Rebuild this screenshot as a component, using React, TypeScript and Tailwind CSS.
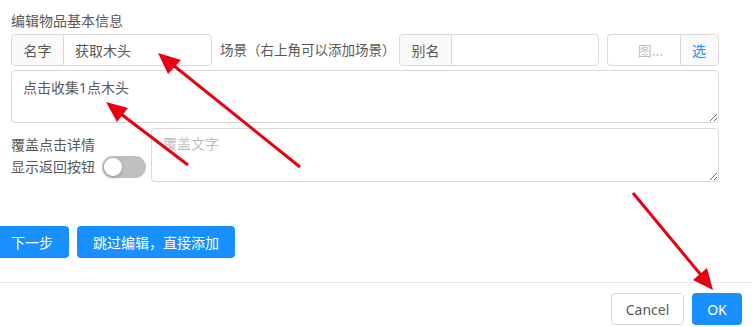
import React from 'react';

const font = "font-['Noto_Sans','Noto_Sans_CJK_SC',sans-serif]";

function Addon({ children, blue }: { children: React.ReactNode; blue?: boolean }) {
  return (
    <div
      className={`flex items-center justify-center bg-[#fafafa] px-[11px] text-[14px] ${
        blue ? 'text-[#1890ff]' : 'text-[#595959]'
      }`}
    >
      {children}
    </div>
  );
}

export default function App() {
  return (
    <div className={`relative w-[752px] h-[327px] overflow-hidden bg-white ${font}`}>
      <div className="pl-[11px] pr-[33px] pt-[11px]">
        {/* 标题 */}
        <div className="h-[20px] leading-[20px] text-[14px] text-[#595959]">编辑物品基本信息</div>

        {/* 名字 / 场景 / 别名 / 图 */}
        <div className="mt-[3px] flex h-[32px] items-stretch">
          <div className="flex w-[201px] rounded-[4px] border border-[#d9d9d9] overflow-hidden">
            <div className="flex w-[52px] items-center justify-center border-r border-[#d9d9d9] bg-[#fafafa] text-[14px] text-[#595959]">
              名字
            </div>
            <div className="flex flex-1 items-center pl-[11px] text-[14px] text-[#595959]">获取木头</div>
          </div>
          <div className="flex w-[187px] items-center pl-[8px] text-[13.5px] text-[#595959] whitespace-nowrap">
            场景（右上角可以添加场景）
          </div>
          <div className="flex w-[200px] rounded-[4px] border border-[#d9d9d9] overflow-hidden">
            <div className="flex w-[52px] items-center justify-center border-r border-[#d9d9d9] bg-[#fafafa] text-[14px] text-[#595959]">
              别名
            </div>
            <div className="flex-1" />
          </div>
          <div className="ml-[8px] flex w-[112px] rounded-[4px] border border-[#d9d9d9] overflow-hidden">
            <div className="flex flex-1 items-center justify-end pr-[17px] text-[14px] text-[#bfbfbf]">图...</div>
            <div className="w-[38px] border-l border-[#d9d9d9] flex">
              <Addon blue>选</Addon>
            </div>
          </div>
        </div>

        {/* 描述 */}
        <textarea
          readOnly
          defaultValue="点击收集1点木头"
          className="mt-[4px] block h-[53px] w-[708px] rounded-[4px] border border-[#d9d9d9] px-[11px] pt-[6px] text-[14px] leading-[21px] text-[#595959] outline-none"
        />

        {/* 覆盖 / 返回按钮 */}
        <div className="mt-[5px] flex">
          <div className="w-[140px] pt-[6px] text-[14px] text-[#595959]">
            <div className="h-[22px] leading-[22px]">覆盖点击详情</div>
            <div className="flex h-[22px] items-center">
              <span className="leading-[22px]">显示返回按钮</span>
              <div className="ml-[7px] relative h-[22px] w-[44px] rounded-full bg-[#bfbfbf]">
                <div className="absolute left-[2px] top-[2px] h-[18px] w-[18px] rounded-full bg-white shadow-[0_2px_4px_rgba(0,35,11,0.2)]" />
              </div>
            </div>
          </div>
          <textarea
            readOnly
            placeholder="覆盖文字"
            className="block h-[54px] w-[568px] rounded-[4px] border border-[#d9d9d9] px-[11px] pt-[4px] text-[14px] leading-[21px] text-[#595959] placeholder:text-[#bfbfbf] outline-none"
          />
        </div>
      </div>

      {/* 下一步 按钮 */}
      <div className="mt-[44px] ml-[-5px] flex gap-[8px]">
        <button className="h-[32px] w-[74px] rounded-[4px] bg-[#1890ff] text-[14px] text-white">下一步</button>
        <button className="h-[32px] w-[158px] rounded-[4px] bg-[#1890ff] text-[14px] text-white">
          跳过编辑，直接添加
        </button>
      </div>

      {/* footer */}
      <div className="mt-[24px] flex justify-end gap-[8px] border-t border-[#e8e8e8] pr-[10px] pt-[10px]">
        <button className="h-[32px] w-[73px] rounded-[4px] border border-[#d9d9d9] bg-white text-[14px] text-[#595959]">
          Cancel
        </button>
        <button className="h-[32px] w-[50px] rounded-[4px] bg-[#1890ff] text-[14px] text-white">OK</button>
      </div>

      {/* 红色箭头标注 */}
      <svg className="pointer-events-none absolute left-0 top-0" width="752" height="327">
        <g stroke="#e60012" strokeWidth="3" fill="none">
          <line x1="300" y1="167" x2="173" y2="65" />
          <line x1="188" y1="165" x2="121" y2="114" />
          <line x1="633" y1="193" x2="701" y2="275" />
        </g>
        <g fill="#e60012">
          <polygon points="158,53 181,60 168,74" />
          <polygon points="106,102 128,108 117,122" />
          <polygon points="713,290 707,268 693,280" />
        </g>
      </svg>
    </div>
  );
}
